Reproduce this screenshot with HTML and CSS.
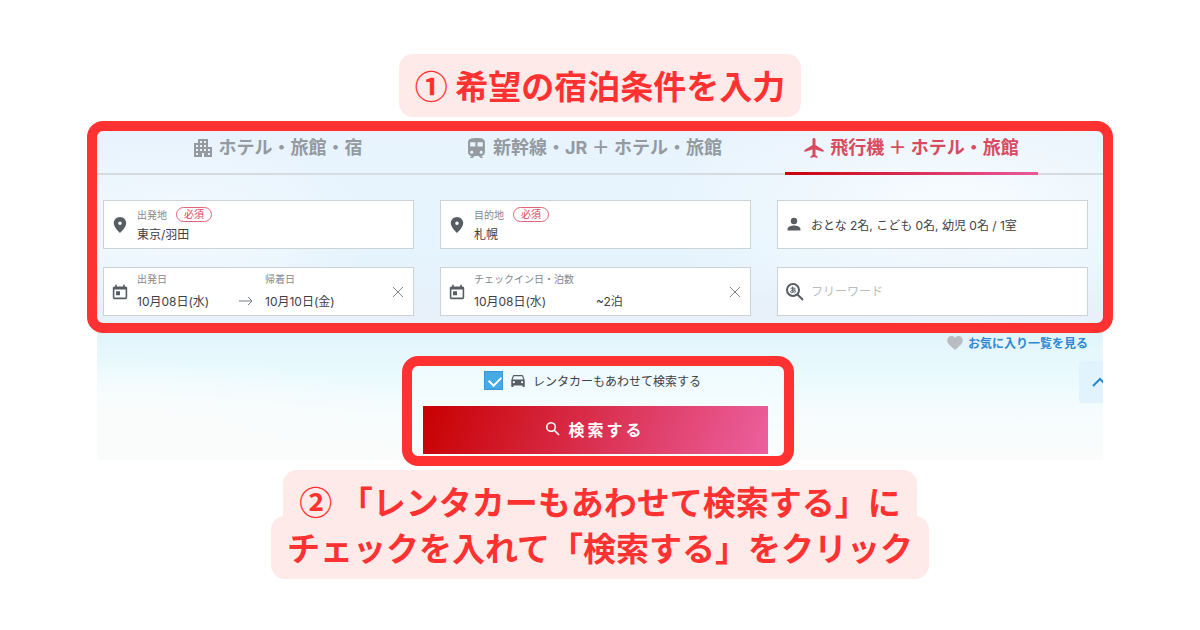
FILE: index.html
```html
<!DOCTYPE html>
<html lang="ja">
<head>
  <meta charset="UTF-8">
  <meta name="viewport" content="width=device-width, initial-scale=1.0">
  <title>宿泊条件の入力</title>
  <link rel="stylesheet" href="styles.css">
</head>
<body>
  <main>
    <h2 class="caption"><span>① 希望の宿泊条件を入力</span></h2>

    <form class="search">
      <section class="highlight conditions">
        <div class="tabs" role="tablist">
          <button type="button" class="tab" role="tab">
            <svg width="20" height="20" viewBox="2 2 20 20"><path d="M17 11V3H7v4H3v14h8v-4h2v4h8V11h-4zM7 19H5v-2h2v2zm0-4H5v-2h2v2zm0-4H5V9h2v2zm4 4H9v-2h2v2zm0-4H9V9h2v2zm0-4H9V5h2v2zm4 8h-2v-2h2v2zm0-4h-2V9h2v2zm0-4h-2V5h2v2zm4 12h-2v-2h2v2zm0-4h-2v-2h2v2z"/></svg>
            ホテル・旅館・宿
          </button>
          <button type="button" class="tab" role="tab">
            <svg width="20" height="20" viewBox="3 2 19 19"><path d="M12 2c-4 0-8 .5-8 4v9.5C4 17.43 5.57 19 7.5 19L6 20.5v.5h2.23l2-2H14l2 2h2v-.5L16.5 19c1.93 0 3.5-1.57 3.5-3.5V6c0-3.5-3.58-4-8-4zM7.5 17c-.83 0-1.5-.67-1.5-1.5S6.67 14 7.5 14s1.5.67 1.5 1.5S8.33 17 7.5 17zm3.5-7H6V6h5v4zm2 0V6h5v4h-5zm3.5 7c-.83 0-1.5-.67-1.5-1.5s.67-1.5 1.5-1.5 1.5.67 1.5 1.5-.67 1.5-1.5 1.5z"/></svg>
            新幹線・JR ＋ ホテル・旅館
          </button>
          <button type="button" class="tab active" role="tab" aria-selected="true">
            <svg width="20" height="20" viewBox="1.5 2 20 20"><path d="M21 16v-2l-8-5V3.5c0-.83-.67-1.5-1.5-1.5S10 2.67 10 3.5V9l-8 5v2l8-2.5V19l-2 1.5V22l3.5-1 3.5 1v-1.5L13 19v-5.5l8 2.5z"/></svg>
            飛行機 ＋ ホテル・旅館
          </button>
        </div>

        <div class="fields">
          <div class="field">
            <svg class="icon" viewBox="3 3 18 18"><path d="M12 3C8.1 3 5 6.1 5 10c0 4.6 7 11 7 11s7-6.4 7-11c0-3.9-3.1-7-7-7zm0 9a2 2 0 1 1 0-4 2 2 0 0 1 0 4z"/></svg>
            <div class="col">
              <div class="label-row"><label for="from">出発地</label><span class="required">必須</span></div>
              <input type="text" id="from" value="東京/羽田">
            </div>
          </div>

          <div class="field">
            <svg class="icon" viewBox="3 3 18 18"><path d="M12 3C8.1 3 5 6.1 5 10c0 4.6 7 11 7 11s7-6.4 7-11c0-3.9-3.1-7-7-7zm0 9a2 2 0 1 1 0-4 2 2 0 0 1 0 4z"/></svg>
            <div class="col">
              <div class="label-row"><label for="to">目的地</label><span class="required">必須</span></div>
              <input type="text" id="to" value="札幌">
            </div>
          </div>

          <div class="field">
            <svg class="icon" viewBox="2 3 20 20"><path d="M12 12a4 4 0 1 0 0-8 4 4 0 0 0 0 8zm0 1.500c-3 0-8 1.400-8 4.200V20h16v-2.300c0-2.800-5-4.200-8-4.200z"/></svg>
            <input type="text" value="おとな 2名, こども 0名, 幼児 0名 / 1室" aria-label="人数・部屋数">
          </div>

          <div class="field dates">
            <svg class="icon" viewBox="2 1 20 20"><path d="M19 4h-1V2h-2v2H8V2H6v2H5c-1.1 0-2 .9-2 2v12c0 1.100.9 2 2 2h14c1.100 0 2-.9 2-2V6c0-1.100-.9-2-2-2zm0 14H5V8h14v10zM7 10h5v5H7z"/></svg>
            <div class="col date">
              <label for="depart">出発日</label>
              <input type="text" id="depart" value="10月08日(水)">
            </div>
            <svg class="arrow" viewBox="0 0 14 24"><path d="M0 12h13M9 8l4 4-4 4"/></svg>
            <div class="col date">
              <label for="return">帰着日</label>
              <input type="text" id="return" value="10月10日(金)">
            </div>
            <button type="button" class="clear" aria-label="クリア"><svg width="10" height="10" viewBox="0 0 10 10"><path d="M0 0l10 10M10 0L0 10"/></svg></button>
          </div>

          <div class="field dates">
            <svg class="icon" viewBox="2 1 20 20"><path d="M19 4h-1V2h-2v2H8V2H6v2H5c-1.1 0-2 .9-2 2v12c0 1.100.9 2 2 2h14c1.100 0 2-.9 2-2V6c0-1.100-.9-2-2-2zm0 14H5V8h14v10zM7 10h5v5H7z"/></svg>
            <div class="col stay">
              <label for="checkin">チェックイン日・泊数</label>
              <input type="text" id="checkin" value="10月08日(水)">
            </div>
            <input type="text" class="nights" value="~2泊" aria-label="泊数">
            <button type="button" class="clear" aria-label="クリア"><svg width="10" height="10" viewBox="0 0 10 10"><path d="M0 0l10 10M10 0L0 10"/></svg></button>
          </div>

          <div class="field">
            <svg class="icon word" viewBox="0 0 18 18"><circle cx="7" cy="7" r="6"/><path class="handle" d="M11.5 11.5l5.500 5.500"/><path class="kana" d="M4.500 5.200h5M6.600 3.600c-.2 2-.1 4 .4 6M9 6.300c-.6 2-2 3.400-3.400 3.400-1.600 0-1.200-2.500 1.400-2.800 2.800-.3 3.500 2.300 1.200 3"/></svg>
            <input type="text" placeholder="フリーワード" aria-label="フリーワード">
          </div>
        </div>
      </section>

      <div class="lower">
        <a class="favorites" href="#favorites">
          <svg width="16" height="14" viewBox="2 3 20 18"><path d="M12 21l-1.500-1.300C5.400 15.400 2 12.300 2 8.500 2 5.400 4.400 3 7.500 3c1.700 0 3.400.8 4.500 2.100C13.100 3.800 14.800 3 16.500 3 19.600 3 22 5.400 22 8.500c0 3.800-3.400 6.900-8.500 11.200z"/></svg>
          お気に入り一覧を見る
        </a>

        <section class="highlight submit">
          <label class="rentacar">
            <input type="checkbox" checked>
            <svg width="14" height="12" viewBox="3 5 18 16"><path d="M18.900 6c-.2-.6-.8-1-1.400-1h-11c-.7 0-1.200.4-1.400 1L3 12v8c0 .6.400 1 1 1h1c.6 0 1-.4 1-1v-1h12v1c0 .6.400 1 1 1h1c.6 0 1-.4 1-1v-8zM6.500 16a1.500 1.500 0 1 1 0-3 1.500 1.500 0 0 1 0 3zm11 0a1.500 1.500 0 1 1 0-3 1.500 1.500 0 0 1 0 3zM5 11l1.500-4.500h11L19 11z"/></svg>
            レンタカーもあわせて検索する
          </label>
          <button type="submit" class="search-btn">
            <svg width="14" height="14" viewBox="3 3 18 18"><path d="M15.500 14h-.79l-.28-.27A6.500 6.500 0 1 0 13.730 14.430l.27.28v.79l5 4.990L20.490 19zM9.500 14a4.500 4.500 0 1 1 0-9 4.500 4.500 0 0 1 0 9z"/></svg>
            <span>検索する</span>
          </button>
        </section>

        <a class="page-top" href="#" aria-label="ページの先頭へ"><svg width="16" height="10" viewBox="0 0 16 10"><path d="M1 9l7-7 7 7"/></svg></a>
      </div>
    </form>

    <h2 class="caption"><span>② 「レンタカーもあわせて検索する」に</span><span>チェックを入れて「検索する」をクリック</span></h2>
  </main>
</body>
</html>
```

FILE: styles.css
```css
* {
  box-sizing: border-box;
}
body {
  margin: 0;
  background: #fff;
  color: #3c4046;
  font-family: Inter, "Noto Sans CJK JP", sans-serif;
  font-size: 12px;
}
main {
  padding: 54px 87px 50px;
}
button, input {
  font: inherit;
  color: inherit;
}
button {
  border: 0;
  background: none;
  padding: 0;
  cursor: pointer;
}
svg {
  fill: currentColor;
  flex: none;
}

/* captions */
.caption {
  margin: 0;
  color: #ff3131;
  font-family: "Noto Sans CJK JP", sans-serif;
  font-size: 33px;
  line-height: 47px;
}
.caption span {
  display: block;
  width: fit-content;
  margin: 0 auto;
  padding: 8px 16px;
  border-radius: 14px;
  background: #ffeaea;
}
.caption span + span {
  margin-top: -17px;
}
.search + .caption {
  margin-top: 10px;
}

/* red frames */
.highlight {
  border: 10px solid #ff3131;
  border-radius: 16px;
}
.conditions {
  margin-top: 4px;
  background:
    radial-gradient(ellipse 200px 90px at 8% 50%, #f8fcffcc, transparent),
    radial-gradient(ellipse 300px 120px at 85% 40%, #fafdffdd, transparent),
    linear-gradient(#e8f3fd, #e5f4fe 60%, #e8f0f9);
}

/* tabs */
.tabs {
  display: flex;
  justify-content: center;
  gap: 64px;
  height: 44px;
  padding: 0 17px 0 6px;
  border-bottom: 2px solid #d5dbdf;
}
.tab {
  display: flex;
  flex: 0 1 253px;
  align-items: center;
  justify-content: center;
  gap: 6px;
  min-width: 0;
  height: 44px;
  padding-bottom: 7px;
  border-bottom: 3px solid transparent;
  color: #949a9f;
  font-size: 18px;
  font-weight: bold;
  line-height: 28px;
  white-space: nowrap;
}
.tab.active {
  color: #d94a5d;
  border-image: linear-gradient(90deg, #c9000b, #e85c9f) 1;
}

/* fields */
.fields {
  display: grid;
  grid-template-columns: repeat(3, 1fr);
  gap: 18px 26px;
  padding: 25px 15px 7px 6px;
}
.field {
  display: flex;
  align-items: center;
  height: 49px;
  padding: 0 10px 0 8px;
  border: 1px solid #cbd3d7;
  background: #fff;
}
.field input {
  width: 100%;
  min-width: 0;
  height: 20px;
  padding: 0;
  border: 0;
  outline: 0;
  background: none;
}
.field input::placeholder {
  color: #b9bcbf;
  opacity: 1;
}
.field label {
  color: #85898d;
  font-size: 10px;
  white-space: nowrap;
}
.icon {
  width: 16px;
  height: 16px;
  margin-right: 9px;
  color: #585c63;
}
.col {
  display: flex;
  flex: 1;
  flex-direction: column;
  line-height: 20px;
}
.label-row {
  display: flex;
  align-items: center;
  gap: 9px;
}
.required {
  padding: 0 7px;
  border: 1px solid #e2627a;
  border-radius: 8px;
  color: #dc3f5c;
  font-size: 10px;
  line-height: 13px;
}
.dates label {
  line-height: 17px;
}
.dates input {
  height: 25px;
}
.date {
  flex: 0 0 94px;
}
.stay {
  flex: 0 0 122px;
}
.arrow {
  align-self: flex-end;
  width: 14px;
  height: 24px;
  margin: 0 12px 2px 8px;
  fill: none;
  stroke: #777c81;
}
.nights {
  align-self: flex-end;
  margin-bottom: 2px;
}
.clear {
  margin-left: auto;
}
.clear svg {
  display: block;
  stroke: #7f8387;
}
.word {
  width: 18px;
  height: 18px;
  margin-right: 7px;
  fill: none;
  stroke: currentColor;
  stroke-width: 2;
}
.word .kana {
  stroke-width: 1;
}

/* area under the fields */
.lower {
  position: relative;
  height: 127px;
  margin: 0 10px;
  padding: 0 15px 0 11px;
  background:
    radial-gradient(ellipse 380px 90px at 0 90%, #fafcfc 40%, transparent),
    linear-gradient(#e2f4fb, #e9fafe 30%, #f6fcfd 65%, #fbfcfb);
}
.favorites {
  display: flex;
  align-items: center;
  justify-content: flex-end;
  gap: 5px;
  height: 23px;
  padding-bottom: 4px;
  color: #3088d0;
  font-weight: bold;
  text-decoration: none;
}
.favorites svg {
  color: #b9bdc1;
}
.submit {
  width: 392px;
  max-width: 100%;
  margin: 0 auto;
  padding: 5px 16px 2px 11px;
  background: linear-gradient(#eefbfe, #fbfdfd);
}
.rentacar {
  display: flex;
  align-items: center;
  justify-content: center;
  gap: 8px;
  height: 19px;
  margin-bottom: 16px;
  padding-right: 6px;
}
.rentacar svg {
  color: #585c63;
}
.rentacar input {
  appearance: none;
  width: 19px;
  height: 19px;
  margin: 0;
  border: 1px solid #3c96d4;
  background: #45aae6;
}
.rentacar input:checked::before {
  content: "";
  display: block;
  width: 10px;
  height: 6px;
  margin: 4px;
  border: solid #fff;
  border-width: 0 0 2px 2px;
  transform: rotate(-45deg);
}
.search-btn {
  display: flex;
  align-items: center;
  justify-content: center;
  gap: 8px;
  width: 100%;
  height: 48px;
  padding-bottom: 3px;
  background: linear-gradient(110deg, #c80000, #ec609f);
  color: #fff;
  font-size: 16px;
  font-weight: bold;
  letter-spacing: 3px;
}

/* sits over the right edge */
.page-top {
  position: absolute;
  top: 28px;
  right: 0;
  display: flex;
  align-items: center;
  width: 24px;
  height: 42px;
  padding-left: 13px;
  overflow: hidden;
  border-radius: 4px 0 0 4px;
  background: #e1f3fd;
}
.page-top svg {
  fill: none;
  stroke: #2b88cf;
  stroke-width: 2;
}
```
